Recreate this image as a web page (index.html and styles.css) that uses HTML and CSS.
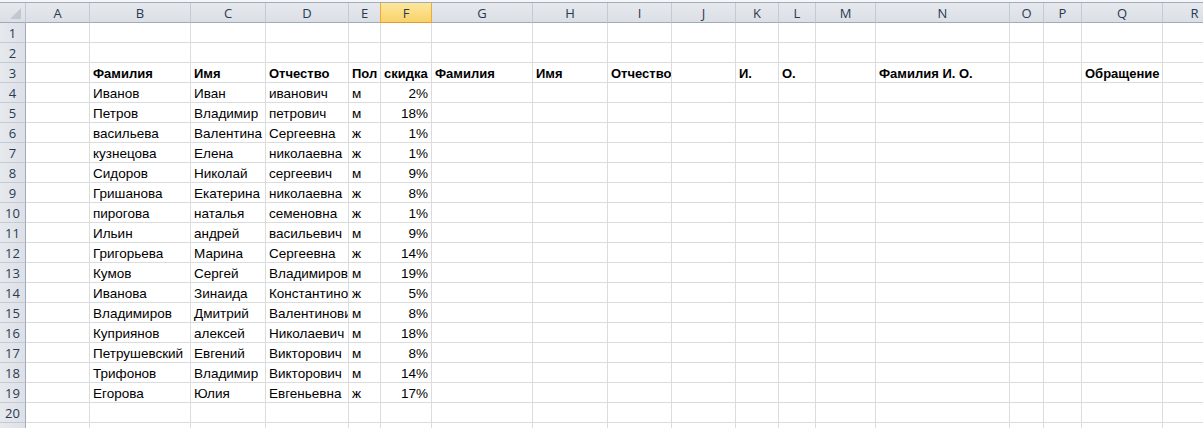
FILE: index.html
```html
<!DOCTYPE html>
<html lang="ru">
<head>
<meta charset="utf-8">
<title>Лист1</title>
<link rel="stylesheet" href="styles.css">
</head>
<body>
<div class="sheet">
  <div class="topline"></div>
  <div class="row hdr">
    <div class="corner"><span class="tri"></span></div>
    <div class="ch">A</div><div class="ch">B</div><div class="ch">C</div><div class="ch">D</div><div class="ch">E</div><div class="ch sel">F</div><div class="ch">G</div><div class="ch">H</div><div class="ch">I</div><div class="ch">J</div><div class="ch">K</div><div class="ch">L</div><div class="ch">M</div><div class="ch">N</div><div class="ch">O</div><div class="ch">P</div><div class="ch">Q</div><div class="ch">R</div>
  </div>
  <div class="row"><div class="rh">1</div><div class="c"></div><div class="c"></div><div class="c"></div><div class="c"></div><div class="c"></div><div class="c"></div><div class="c"></div><div class="c"></div><div class="c"></div><div class="c"></div><div class="c"></div><div class="c"></div><div class="c"></div><div class="c"></div><div class="c"></div><div class="c"></div><div class="c"></div><div class="c"></div></div>
  <div class="row"><div class="rh">2</div><div class="c"></div><div class="c"></div><div class="c"></div><div class="c"></div><div class="c"></div><div class="c"></div><div class="c"></div><div class="c"></div><div class="c"></div><div class="c"></div><div class="c"></div><div class="c"></div><div class="c"></div><div class="c"></div><div class="c"></div><div class="c"></div><div class="c"></div><div class="c"></div></div>
  <div class="row bold"><div class="rh">3</div><div class="c"></div><div class="c">Фамилия</div><div class="c">Имя</div><div class="c">Отчество</div><div class="c">Пол</div><div class="c">скидка</div><div class="c">Фамилия</div><div class="c">Имя</div><div class="c">Отчество</div><div class="c"></div><div class="c">И.</div><div class="c">О.</div><div class="c"></div><div class="c">Фамилия И. О.</div><div class="c"></div><div class="c"></div><div class="c">Обращение</div><div class="c"></div></div>
  <div class="row"><div class="rh">4</div><div class="c"></div><div class="c">Иванов</div><div class="c">Иван</div><div class="c">иванович</div><div class="c">м</div><div class="c num">2%</div><div class="c"></div><div class="c"></div><div class="c"></div><div class="c"></div><div class="c"></div><div class="c"></div><div class="c"></div><div class="c"></div><div class="c"></div><div class="c"></div><div class="c"></div><div class="c"></div></div>
  <div class="row"><div class="rh">5</div><div class="c"></div><div class="c">Петров</div><div class="c">Владимир</div><div class="c">петрович</div><div class="c">м</div><div class="c num">18%</div><div class="c"></div><div class="c"></div><div class="c"></div><div class="c"></div><div class="c"></div><div class="c"></div><div class="c"></div><div class="c"></div><div class="c"></div><div class="c"></div><div class="c"></div><div class="c"></div></div>
  <div class="row"><div class="rh">6</div><div class="c"></div><div class="c">васильева</div><div class="c">Валентина</div><div class="c">Сергеевна</div><div class="c">ж</div><div class="c num">1%</div><div class="c"></div><div class="c"></div><div class="c"></div><div class="c"></div><div class="c"></div><div class="c"></div><div class="c"></div><div class="c"></div><div class="c"></div><div class="c"></div><div class="c"></div><div class="c"></div></div>
  <div class="row"><div class="rh">7</div><div class="c"></div><div class="c">кузнецова</div><div class="c">Елена</div><div class="c">николаевна</div><div class="c">ж</div><div class="c num">1%</div><div class="c"></div><div class="c"></div><div class="c"></div><div class="c"></div><div class="c"></div><div class="c"></div><div class="c"></div><div class="c"></div><div class="c"></div><div class="c"></div><div class="c"></div><div class="c"></div></div>
  <div class="row"><div class="rh">8</div><div class="c"></div><div class="c">Сидоров</div><div class="c">Николай</div><div class="c">сергеевич</div><div class="c">м</div><div class="c num">9%</div><div class="c"></div><div class="c"></div><div class="c"></div><div class="c"></div><div class="c"></div><div class="c"></div><div class="c"></div><div class="c"></div><div class="c"></div><div class="c"></div><div class="c"></div><div class="c"></div></div>
  <div class="row"><div class="rh">9</div><div class="c"></div><div class="c">Гришанова</div><div class="c">Екатерина</div><div class="c">николаевна</div><div class="c">ж</div><div class="c num">8%</div><div class="c"></div><div class="c"></div><div class="c"></div><div class="c"></div><div class="c"></div><div class="c"></div><div class="c"></div><div class="c"></div><div class="c"></div><div class="c"></div><div class="c"></div><div class="c"></div></div>
  <div class="row"><div class="rh">10</div><div class="c"></div><div class="c">пирогова</div><div class="c">наталья</div><div class="c">семеновна</div><div class="c">ж</div><div class="c num">1%</div><div class="c"></div><div class="c"></div><div class="c"></div><div class="c"></div><div class="c"></div><div class="c"></div><div class="c"></div><div class="c"></div><div class="c"></div><div class="c"></div><div class="c"></div><div class="c"></div></div>
  <div class="row"><div class="rh">11</div><div class="c"></div><div class="c">Ильин</div><div class="c">андрей</div><div class="c">васильевич</div><div class="c">м</div><div class="c num">9%</div><div class="c"></div><div class="c"></div><div class="c"></div><div class="c"></div><div class="c"></div><div class="c"></div><div class="c"></div><div class="c"></div><div class="c"></div><div class="c"></div><div class="c"></div><div class="c"></div></div>
  <div class="row"><div class="rh">12</div><div class="c"></div><div class="c">Григорьева</div><div class="c">Марина</div><div class="c">Сергеевна</div><div class="c">ж</div><div class="c num">14%</div><div class="c"></div><div class="c"></div><div class="c"></div><div class="c"></div><div class="c"></div><div class="c"></div><div class="c"></div><div class="c"></div><div class="c"></div><div class="c"></div><div class="c"></div><div class="c"></div></div>
  <div class="row"><div class="rh">13</div><div class="c"></div><div class="c">Кумов</div><div class="c">Сергей</div><div class="c">Владимирович</div><div class="c">м</div><div class="c num">19%</div><div class="c"></div><div class="c"></div><div class="c"></div><div class="c"></div><div class="c"></div><div class="c"></div><div class="c"></div><div class="c"></div><div class="c"></div><div class="c"></div><div class="c"></div><div class="c"></div></div>
  <div class="row"><div class="rh">14</div><div class="c"></div><div class="c">Иванова</div><div class="c">Зинаида</div><div class="c">Константиновна</div><div class="c">ж</div><div class="c num">5%</div><div class="c"></div><div class="c"></div><div class="c"></div><div class="c"></div><div class="c"></div><div class="c"></div><div class="c"></div><div class="c"></div><div class="c"></div><div class="c"></div><div class="c"></div><div class="c"></div></div>
  <div class="row"><div class="rh">15</div><div class="c"></div><div class="c">Владимиров</div><div class="c">Дмитрий</div><div class="c">Валентинович</div><div class="c">м</div><div class="c num">8%</div><div class="c"></div><div class="c"></div><div class="c"></div><div class="c"></div><div class="c"></div><div class="c"></div><div class="c"></div><div class="c"></div><div class="c"></div><div class="c"></div><div class="c"></div><div class="c"></div></div>
  <div class="row"><div class="rh">16</div><div class="c"></div><div class="c">Куприянов</div><div class="c">алексей</div><div class="c">Николаевич</div><div class="c">м</div><div class="c num">18%</div><div class="c"></div><div class="c"></div><div class="c"></div><div class="c"></div><div class="c"></div><div class="c"></div><div class="c"></div><div class="c"></div><div class="c"></div><div class="c"></div><div class="c"></div><div class="c"></div></div>
  <div class="row"><div class="rh">17</div><div class="c"></div><div class="c">Петрушевский</div><div class="c">Евгений</div><div class="c">Викторович</div><div class="c">м</div><div class="c num">8%</div><div class="c"></div><div class="c"></div><div class="c"></div><div class="c"></div><div class="c"></div><div class="c"></div><div class="c"></div><div class="c"></div><div class="c"></div><div class="c"></div><div class="c"></div><div class="c"></div></div>
  <div class="row"><div class="rh">18</div><div class="c"></div><div class="c">Трифонов</div><div class="c">Владимир</div><div class="c">Викторович</div><div class="c">м</div><div class="c num">14%</div><div class="c"></div><div class="c"></div><div class="c"></div><div class="c"></div><div class="c"></div><div class="c"></div><div class="c"></div><div class="c"></div><div class="c"></div><div class="c"></div><div class="c"></div><div class="c"></div></div>
  <div class="row"><div class="rh">19</div><div class="c"></div><div class="c">Егорова</div><div class="c">Юлия</div><div class="c">Евгеньевна</div><div class="c">ж</div><div class="c num">17%</div><div class="c"></div><div class="c"></div><div class="c"></div><div class="c"></div><div class="c"></div><div class="c"></div><div class="c"></div><div class="c"></div><div class="c"></div><div class="c"></div><div class="c"></div><div class="c"></div></div>
  <div class="row"><div class="rh">20</div><div class="c"></div><div class="c"></div><div class="c"></div><div class="c"></div><div class="c"></div><div class="c"></div><div class="c"></div><div class="c"></div><div class="c"></div><div class="c"></div><div class="c"></div><div class="c"></div><div class="c"></div><div class="c"></div><div class="c"></div><div class="c"></div><div class="c"></div><div class="c"></div></div>
  <div class="row"><div class="rh">21</div><div class="c"></div><div class="c"></div><div class="c"></div><div class="c"></div><div class="c"></div><div class="c"></div><div class="c"></div><div class="c"></div><div class="c"></div><div class="c"></div><div class="c"></div><div class="c"></div><div class="c"></div><div class="c"></div><div class="c"></div><div class="c"></div><div class="c"></div><div class="c"></div></div>
</div>
</body>
</html>
```

FILE: styles.css
```css
html, body {
  margin: 0;
  padding: 0;
  background: #ffffff;
  overflow: hidden;
}
.sheet {
  width: 1203px;
  font-family: "Liberation Sans", Arial, sans-serif;
  font-size: 13.5px;
  color: #000;
}
.topline {
  height: 2px;
  background: #f4f6f9;
  border-bottom: 1px solid #a3acb7;
}
.row {
  display: grid;
  grid-template-columns: 26px 64px 101px 75px 83px 32px 51px 101px 75px 64px 64px 43px 37px 60px 134px 34px 38px 81px 64px;
  height: 20px;
}
.row > div {
  box-sizing: border-box;
  height: 20px;
  border-right: 1px solid #dadcdd;
  border-bottom: 1px solid #dadcdd;
  overflow: hidden;
  white-space: nowrap;
  padding: 3px 3px 0 3px;
  line-height: 15px;
}
.bold .c {
  font-weight: bold;
  font-size: 13px;
}
.c.num {
  text-align: right;
}
.hdr > div {
  background: linear-gradient(#e5e8ed, #dcdfe5);
  border-right: 1px solid #c5cad2;
  border-bottom: 1px solid #9eabbb;
  color: #2a3950;
  text-align: center;
  padding: 3px 0 0 0;
  font-family: "Open Sans", "Liberation Sans", sans-serif;
  font-size: 13px;
  line-height: 15px;
}
.hdr > .ch.sel {
  background: linear-gradient(#fde69c, #f8d36c);
  border-right: 1px solid #f2a93a;
  border-left: 1px solid #f2a93a;
  border-bottom: 1px solid #e8992c;
  margin-left: -1px;
}
.corner {
  position: relative;
}
.tri {
  position: absolute;
  right: 4px;
  bottom: 3px;
  width: 11px;
  height: 11px;
  background: #c2c8cf;
  clip-path: polygon(100% 0, 100% 100%, 0 100%);
}
.rh {
  background: linear-gradient(90deg, #e6e9ee, #dde1e7);
  color: #2a3950;
  text-align: center;
  font-family: "Open Sans", "Liberation Sans", sans-serif;
  font-size: 13px;
  border-right: 1px solid #9eabbb !important;
  border-bottom: 1px solid #c5cad2 !important;
  padding: 3px 0 0 0 !important;
}
```
